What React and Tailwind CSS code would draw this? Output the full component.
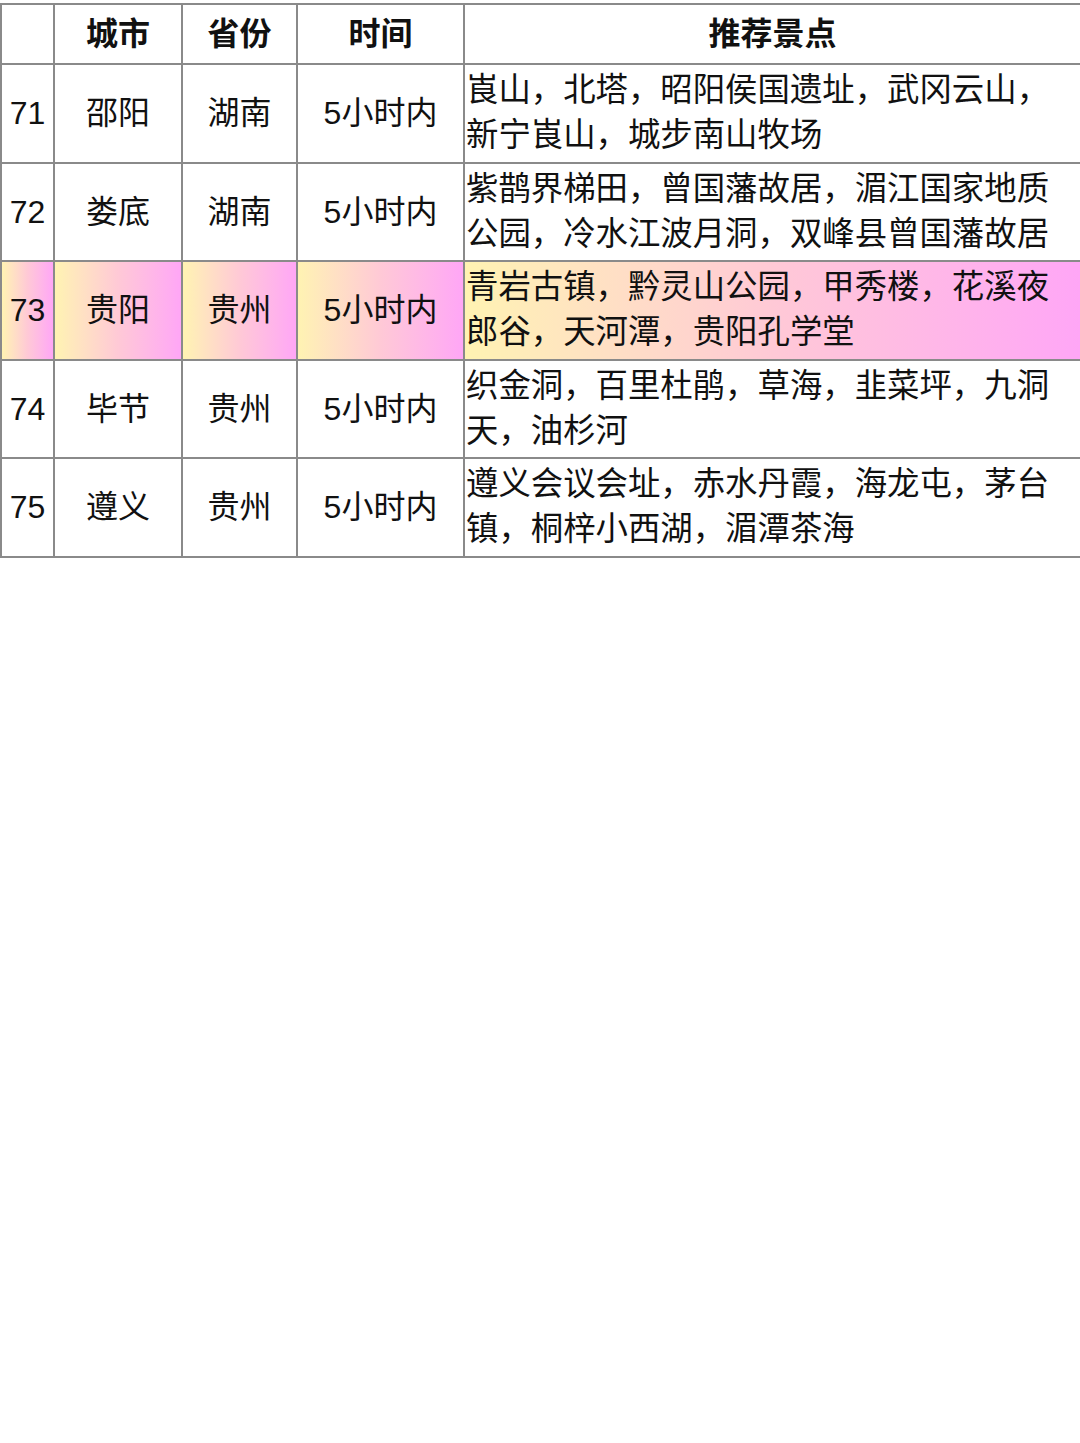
const rows = [
  { no: "71", city: "邵阳", prov: "湖南", time: "5小时内", spots: ["崀山，北塔，昭阳侯国遗址，武冈云山，", "新宁崀山，城步南山牧场"] },
  { no: "72", city: "娄底", prov: "湖南", time: "5小时内", spots: ["紫鹊界梯田，曾国藩故居，湄江国家地质", "公园，冷水江波月洞，双峰县曾国藩故居"] },
  { no: "73", city: "贵阳", prov: "贵州", time: "5小时内", spots: ["青岩古镇，黔灵山公园，甲秀楼，花溪夜", "郎谷，天河潭，贵阳孔学堂"], hot: true },
  { no: "74", city: "毕节", prov: "贵州", time: "5小时内", spots: ["织金洞，百里杜鹃，草海，韭菜坪，九洞", "天，油杉河"] },
  { no: "75", city: "遵义", prov: "贵州", time: "5小时内", spots: ["遵义会议会址，赤水丹霞，海龙屯，茅台", "镇，桐梓小西湖，湄潭茶海"] },
];

const font = { fontFamily: '"Liberation Sans", "Noto Sans CJK SC", sans-serif' };

export default function App() {
  return (
    <div className="w-[1080px] min-h-[1443px] bg-white pt-[3px] text-[#111] [text-spacing-trim:space-all]" style={font}>
      <table className="w-[1080px] border-collapse table-fixed">
        <colgroup>
          <col className="w-[53px]" />
          <col className="w-[128px]" />
          <col className="w-[115px]" />
          <col className="w-[167px]" />
          <col className="w-[617px]" />
        </colgroup>
        <thead>
          <tr className="h-[60px] text-[32px] font-bold">
            <th className="border-2 border-[#8a8a8a]"></th>
            <th className="border-2 border-[#8a8a8a]">城市</th>
            <th className="border-2 border-[#8a8a8a]">省份</th>
            <th className="border-2 border-[#8a8a8a]">时间</th>
            <th className="border-2 border-[#8a8a8a]">推荐景点</th>
          </tr>
        </thead>
        <tbody>
          {rows.map((r) => {
            const bg = r.hot ? "bg-linear-to-r from-[#fff3b2] via-[#ffc9d6] to-[#ffa6f6]" : "";
            return (
              <tr key={r.no} className="h-[98.5px] text-[32px]">
                <td className={`border-2 border-[#8a8a8a] text-center ${bg}`}>{r.no}</td>
                <td className={`border-2 border-[#8a8a8a] text-center ${bg}`}>{r.city}</td>
                <td className={`border-2 border-[#8a8a8a] text-center ${bg}`}>{r.prov}</td>
                <td className={`border-2 border-[#8a8a8a] text-center ${bg}`}>{r.time}</td>
                <td className={`border-2 border-[#8a8a8a] pl-[1px] text-[32.4px] leading-[45px] whitespace-nowrap ${bg}`}>
                  {r.spots.map((line, i) => (
                    <div key={i}>{line}</div>
                  ))}
                </td>
              </tr>
            );
          })}
        </tbody>
      </table>
    </div>
  );
}
